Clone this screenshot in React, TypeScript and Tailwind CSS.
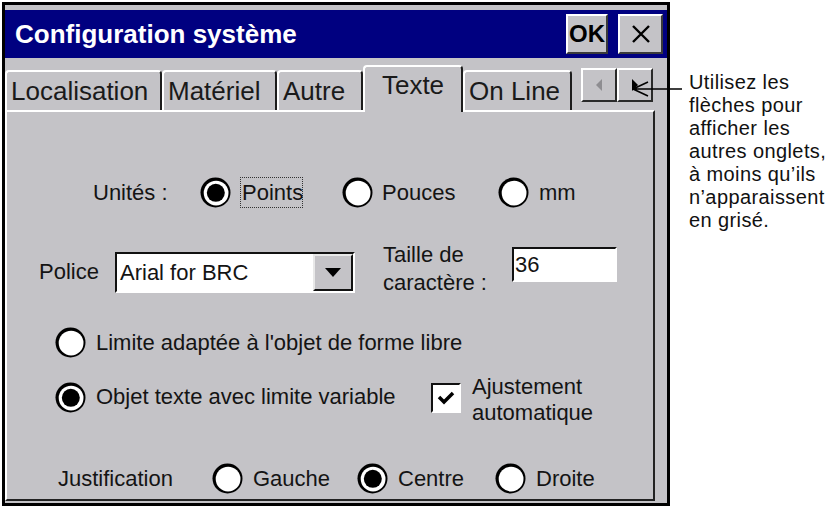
import React from "react";

const font = "font-['Liberation_Sans',Arial,sans-serif]";

function Radio({ checked = false }: { checked?: boolean }) {
  return (
    <svg width="31" height="31" viewBox="0 0 31 31" className="shrink-0">
      <circle cx="15.5" cy="15.5" r="15" fill="#000" />
      <circle cx="16.1" cy="16.1" r="12.4" fill="#fff" />
      {checked && <circle cx="15.8" cy="15.8" r="9" fill="#000" />}
    </svg>
  );
}

function Tab({
  label,
  width,
  selected = false
}: {
  label: string;
  width: number;
  selected?: boolean;
}) {
  if (selected) {
    return (
      <div
        className="relative z-10 -mb-[2px] flex h-[47px] shrink-0 items-center justify-center rounded-t-[4px] border-l-2 border-r-2 border-t-2 border-l-white border-r-[#1c1c1c] border-t-white bg-[#c4c3c7] pb-[9px] text-[26px] text-[#1a1a1a]"
        style={{ width }}
      >
        {label}
      </div>
    );
  }
  return (
    <div
      className="flex h-[40px] shrink-0 items-center overflow-hidden rounded-t-[4px] border-l-2 border-r-2 border-t-2 border-l-white border-r-[#1c1c1c] border-t-white bg-[#c4c3c7] pl-[4px] text-[26px] text-[#1a1a1a]"
      style={{ width }}
    >
      <span className="whitespace-nowrap">{label}</span>
    </div>
  );
}

function ArrowButton({ dir }: { dir: "left" | "right" }) {
  return (
    <div className="flex h-[34px] w-[36px] items-center justify-center border-b-2 border-l-2 border-r-2 border-t-2 border-b-[#2a2a2a] border-l-white border-r-[#2a2a2a] border-t-white bg-[#c4c3c7]">
      <svg width="8" height="12" viewBox="0 0 8 12">
        {dir === "left" ? (
          <polygon points="7,0 7,12 1,6" fill="#8e8d91" />
        ) : (
          <polygon points="1,0 1,12 7,6" fill="#000" />
        )}
      </svg>
    </div>
  );
}

export default function App() {
  return (
    <div
      className={`relative flex h-[507px] w-[839px] items-start overflow-hidden bg-white ${font}`}
    >
      {/* Dialog */}
      <div className="ml-[2px] mt-[2px] flex h-[504px] w-[668px] shrink-0 flex-col border-[3px] border-black bg-[#c4c3c7]">
        {/* Title bar */}
        <div className="mt-[5px] flex h-[48px] items-center bg-[#000080] pl-[10px] pr-[4px]">
          <span className="text-[26px] font-bold text-white">
            Configuration système
          </span>
          <div className="ml-auto flex h-[40px] w-[42px] items-center justify-center border-2 border-b-[#3a3a3a] border-l-white border-r-[#3a3a3a] border-t-white bg-[#c4c3c7] text-[24px] font-bold text-black">
            OK
          </div>
          <div className="ml-[10px] flex h-[40px] w-[45px] items-center justify-center border-2 border-b-[#3a3a3a] border-l-white border-r-[#3a3a3a] border-t-white bg-[#c4c3c7]">
            <svg width="18" height="18" viewBox="0 0 18 18">
              <path d="M1 1 L17 17 M17 1 L1 17" stroke="#000" strokeWidth="2.4" />
            </svg>
          </div>
        </div>

        {/* Tab control */}
        <div className="flex w-[650px] flex-col">
          <div className="flex h-[52px] items-end">
            <Tab label="Localisation" width={157} />
            <Tab label="Matériel" width={115} />
            <Tab label="Autre" width={86} />
            <Tab label="Texte" width={100} selected />
            <Tab label="On Line" width={109} />
            <div className="mb-[8px] ml-[9px] flex">
              <ArrowButton dir="left" />
              <ArrowButton dir="right" />
            </div>
          </div>

          {/* Panel */}
          <div className="flex h-[391px] flex-col border-b-2 border-l-2 border-r-2 border-t-2 border-b-[#222] border-l-white border-r-[#222] border-t-white text-[22px] text-[#141414]">
            {/* Unités */}
            <div className="mt-[65px] flex h-[30px] items-center">
              <span className="ml-[86px] w-[107px] shrink-0">Unités :</span>
              <Radio checked />
              <span className="ml-[9px] flex h-[31px] w-[63px] items-center border border-dotted border-[#333] pl-[1px]">
                Points
              </span>
              <div className="ml-[39px]">
                <Radio />
              </div>
              <span className="ml-[9px] w-[116px] shrink-0">Pouces</span>
              <Radio />
              <span className="ml-[10px]">mm</span>
            </div>

            {/* Police */}
            <div className="mt-[34px] flex h-[52px] items-start">
              <span className="ml-[32px] mt-[18px] w-[76px] shrink-0 leading-[26px]">
                Police
              </span>
              <div className="mt-[11px] flex h-[41px] w-[240px] shrink-0 border-b-2 border-l-2 border-r-2 border-t-2 border-b-white border-l-[#111] border-r-white border-t-[#111] bg-white">
                <span className="flex flex-1 items-center pl-[3px]">
                  Arial for BRC
                </span>
                <div className="flex w-[40px] items-center justify-center border-b-2 border-l-2 border-r-2 border-t-2 border-b-[#111] border-l-[#e8e8e8] border-r-[#111] border-t-[#e8e8e8] bg-[#c4c3c7]">
                  <svg width="16" height="9" viewBox="0 0 16 9">
                    <polygon points="0,0 16,0 8,9" fill="#000" />
                  </svg>
                </div>
              </div>
              <span className="ml-[28px] w-[129px] shrink-0 leading-[28px]">
                Taille de
                <br />
                caractère :
              </span>
              <div className="mt-[6px] flex h-[35px] w-[105px] items-center border-b-2 border-l-2 border-r-2 border-t-2 border-b-white border-l-[#111] border-r-white border-t-[#111] bg-white pl-[1px]">
                36
              </div>
            </div>

            {/* Limite */}
            <div className="mt-[34px] flex h-[31px] items-center">
              <div className="ml-[48px]">
                <Radio />
              </div>
              <span className="ml-[10px]">
                Limite adaptée à l'objet de forme libre
              </span>
            </div>

            {/* Objet texte */}
            <div className="mt-[16px] flex h-[52px] items-start">
              <div className="ml-[48px] mt-[8px]">
                <Radio checked />
              </div>
              <span className="ml-[10px] mt-[10px] w-[335px] shrink-0 leading-[26px]">
                Objet texte avec limite variable
              </span>
              <div className="mt-[9px] flex h-[30px] w-[30px] shrink-0 items-center justify-center border-b-2 border-l-2 border-r-2 border-t-2 border-b-white border-l-[#111] border-r-white border-t-[#111] bg-white">
                <svg width="20" height="18" viewBox="0 0 20 18">
                  <polyline
                    points="3,8 8,13 17,4"
                    fill="none"
                    stroke="#000"
                    strokeWidth="3.5"
                  />
                </svg>
              </div>
              <span className="ml-[11px] leading-[26px]">
                Ajustement
                <br />
                automatique
              </span>
            </div>

            {/* Justification */}
            <div className="mt-[37px] flex h-[31px] items-center">
              <span className="ml-[51px] w-[154px] shrink-0">Justification</span>
              <Radio />
              <span className="ml-[10px] w-[104px] shrink-0">Gauche</span>
              <Radio checked />
              <span className="ml-[10px] w-[97px] shrink-0">Centre</span>
              <Radio />
              <span className="ml-[10px]">Droite</span>
            </div>
          </div>
        </div>
      </div>

      {/* Annotation */}
      <p className="ml-[19px] mt-[71px] whitespace-nowrap text-[20px] leading-[23px] tracking-[0.4px] text-[#111]">
        Utilisez les
        <br />
        flèches pour
        <br />
        afficher les
        <br />
        autres onglets,
        <br />
        à moins qu’ils
        <br />
        n’apparaissent
        <br />
        en grisé.
      </p>

      {/* Pointer arrow */}
      <svg
        className="pointer-events-none absolute left-0 top-0"
        width="839"
        height="507"
        viewBox="0 0 839 507"
      >
        <path
          d="M633 89 L682 89 M633 89 L648 82 M633 89 L648 96"
          stroke="#000"
          strokeWidth="1.6"
          fill="none"
        />
      </svg>
    </div>
  );
}
